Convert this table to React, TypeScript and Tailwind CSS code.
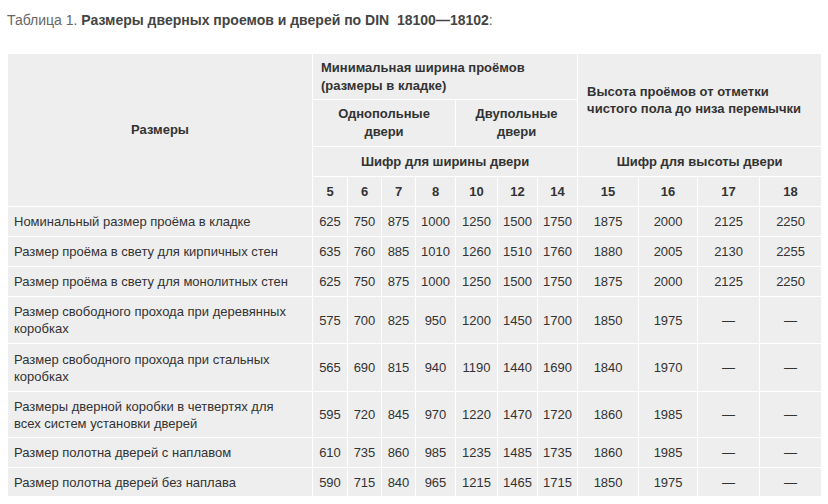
const widthCodes = ["5", "6", "7", "8", "10", "12", "14"];
const heightCodes = ["15", "16", "17", "18"];

const rows: { label: string; values: string[]; h: string }[] = [
  { label: "Номинальный размер проёма в кладке", values: ["625", "750", "875", "1000", "1250", "1500", "1750", "1875", "2000", "2125", "2250"], h: "h-[30px]" },
  { label: "Размер проёма в свету для кирпичных стен", values: ["635", "760", "885", "1010", "1260", "1510", "1760", "1880", "2005", "2130", "2255"], h: "h-[30px]" },
  { label: "Размер проёма в свету для монолитных стен", values: ["625", "750", "875", "1000", "1250", "1500", "1750", "1875", "2000", "2125", "2250"], h: "h-[30px]" },
  { label: "Размер свободного прохода при деревянных коробках", values: ["575", "700", "825", "950", "1200", "1450", "1700", "1850", "1975", "—", "—"], h: "h-[47px]" },
  { label: "Размер свободного прохода при стальных коробках", values: ["565", "690", "815", "940", "1190", "1440", "1690", "1840", "1970", "—", "—"], h: "h-[48px]" },
  { label: "Размеры дверной коробки в четвертях для всех систем установки дверей", values: ["595", "720", "845", "970", "1220", "1470", "1720", "1860", "1985", "—", "—"], h: "h-[46px]" },
  { label: "Размер полотна дверей с наплавом", values: ["610", "735", "860", "985", "1235", "1485", "1735", "1860", "1985", "—", "—"], h: "h-[30px]" },
  { label: "Размер полотна дверей без наплава", values: ["590", "715", "840", "965", "1215", "1465", "1715", "1850", "1975", "—", "—"], h: "h-[29px]" },
];

const colWidths = ["w-[305px]", "w-[35px]", "w-[34px]", "w-[34px]", "w-[40px]", "w-[42px]", "w-[40px]", "w-[40px]", "w-[61px]", "w-[59px]", "w-[62px]", "w-[62px]"];

export default function App() {
  return (
    <div className="min-h-screen bg-white px-[7px] pt-[10px] font-['Liberation_Sans',Arial,sans-serif] text-[#333]">
      {/* Caption */}
      <p className="text-[14px] leading-[20px] text-[#666]">
        Таблица 1. <b className="text-[#444]">Размеры дверных проемов и дверей по DIN&nbsp; 18100—18102</b>:
      </p>

      <table className="mt-[23px] w-[814px] table-fixed border-collapse bg-[#eeeeee] text-[13px]">
        <colgroup>
          {colWidths.map((w, i) => (
            <col key={i} className={w} />
          ))}
        </colgroup>
        <thead className="font-bold leading-[18px]">
          <tr className="h-[46px]">
            <th rowSpan={4} className="border border-white text-center">Размеры</th>
            <th colSpan={7} className="border border-white px-[8px] text-left">
              Минимальная ширина проёмов (размеры в кладке)
            </th>
            <th colSpan={4} rowSpan={2} className="border border-white pl-[9px] pr-[8px] text-left leading-[17px]">
              Высота проёмов от отметки чистого пола до низа перемычки
            </th>
          </tr>
          <tr className="h-[47px]">
            <th colSpan={4} className="border border-white px-[8px] text-center">Однопольные двери</th>
            <th colSpan={3} className="border border-white px-[8px] text-center">Двупольные двери</th>
          </tr>
          <tr className="h-[30px]">
            <th colSpan={7} className="border border-white text-center">Шифр для ширины двери</th>
            <th colSpan={4} className="border border-white text-center">Шифр для высоты двери</th>
          </tr>
          <tr className="h-[30px]">
            {[...widthCodes, ...heightCodes].map((c) => (
              <th key={c} className="border border-white text-center">{c}</th>
            ))}
          </tr>
        </thead>
        <tbody className="leading-[17px]">
          {rows.map((r) => (
            <tr key={r.label} className={r.h}>
              <td className="border border-white pl-[6px] pr-[16px] text-left">{r.label}</td>
              {r.values.map((v, i) => (
                <td key={i} className="border border-white text-center">{v}</td>
              ))}
            </tr>
          ))}
        </tbody>
      </table>
    </div>
  );
}
